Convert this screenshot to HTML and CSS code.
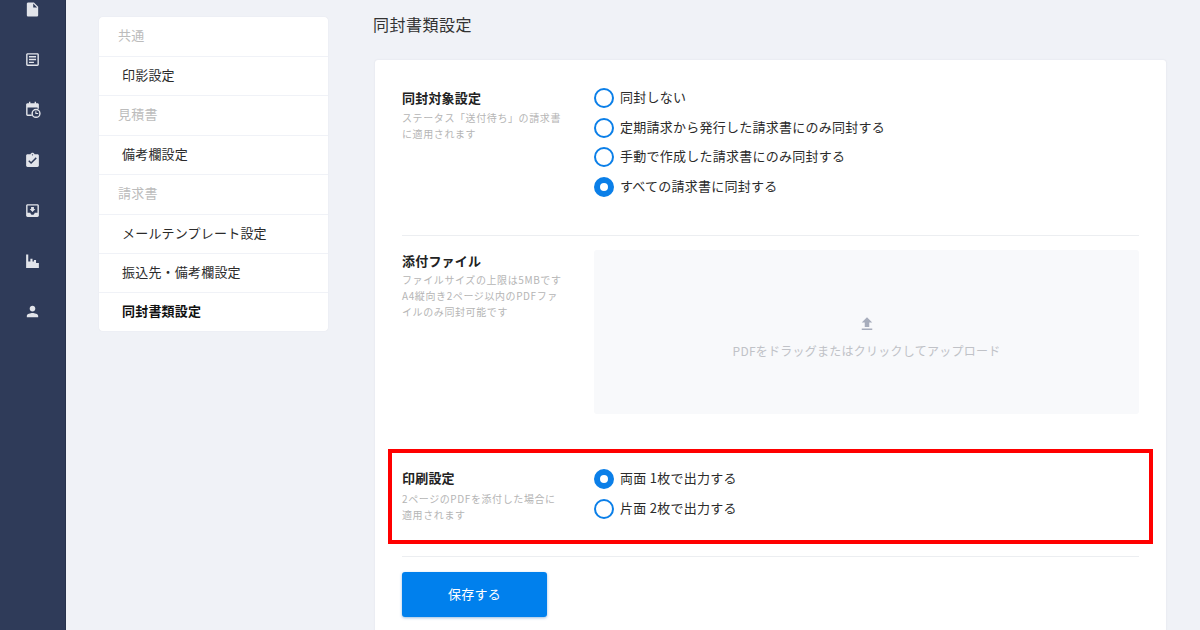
FILE: index.html
```html
<!doctype html>
<html lang="ja">
<head>
  <meta charset="utf-8">
  <meta name="viewport" content="width=device-width, initial-scale=1.0">
  <title>同封書類設定</title>
  <link rel="stylesheet" href="styles.css">
</head>
<body>

<div class="app">
  <nav class="sidebar">
    <a class="nav-icon"><svg viewBox="0 0 24 24"><path d="M6 2c-1.1 0-2 .9-2 2v16c0 1.1.9 2 2 2h12c1.1 0 2-.9 2-2V8l-6-6H6zm7 7V3.5L18.500 9H13z"/></svg></a>
    <a class="nav-icon"><svg viewBox="0 0 24 24"><path d="M19 5v14H5V5h14m0-2H5c-1.100 0-2 .9-2 2v14c0 1.100.9 2 2 2h14c1.100 0 2-.9 2-2V5c0-1.100-.9-2-2-2zM7 7h10v2H7V7zm0 4h10v2H7v-2zm0 4h7v2H7v-2z"/></svg></a>
    <a class="nav-icon"><svg viewBox="0 0 24 24"><path d="M7 1h2v2h6V1h2v2h2c1.100 0 2 .9 2 2v6h-2V9H5v10h6v2H5c-1.100 0-2-.9-2-2V5c0-1.100.9-2 2-2h2V1z"/><path fill-rule="evenodd" d="M17 11a6.500 6.500 0 1 0 0 13 6.500 6.500 0 0 0 0-13zm0 2a4.500 4.500 0 1 1 0 9 4.500 4.500 0 0 1 0-9zm-1 1.500V18.500h4V17h-2.500v-2.500H16z"/></svg></a>
    <a class="nav-icon"><svg viewBox="0 0 24 24"><path d="M19 3h-4.180C14.400 1.840 13.300 1 12 1s-2.400.84-2.820 2H5c-1.100 0-2 .9-2 2v14c0 1.100.9 2 2 2h14c1.100 0 2-.9 2-2V5c0-1.100-.9-2-2-2zm-7 0c.55 0 1 .45 1 1s-.45 1-1 1-1-.45-1-1 .45-1 1-1zm-2 14l-4-4 1.410-1.410L10 14.170l6.590-6.590L18 9l-8 8z"/></svg></a>
    <a class="nav-icon"><svg viewBox="0 0 24 24"><path d="M19 3H5c-1.100 0-2 .9-2 2v14c0 1.100.9 2 2 2h14c1.100 0 2-.9 2-2V5c0-1.100-.9-2-2-2zm0 12h-4c0 1.660-1.350 3-3 3s-3-1.340-3-3H5V5h14v10zm-3-5h-2V7h-4v3H8l4 4 4-4z"/></svg></a>
    <a class="nav-icon"><svg viewBox="0 0 24 24"><path d="M3 2h3v10h3V8h3v4h2v-2h3v4h4v7H3V2z"/></svg></a>
    <a class="nav-icon"><svg viewBox="0 0 24 24"><path d="M12 12c2.210 0 4-1.790 4-4s-1.790-4-4-4-4 1.790-4 4 1.790 4 4 4zm0 2c-2.670 0-8 1.340-8 4v2h16v-2c0-2.660-5.330-4-8-4z"/></svg></a>
  </nav>

  <aside class="menu">
    <div class="menu-group">共通</div>
    <div class="menu-item">印影設定</div>
    <div class="menu-group">見積書</div>
    <div class="menu-item">備考欄設定</div>
    <div class="menu-group">請求書</div>
    <div class="menu-item">メールテンプレート設定</div>
    <div class="menu-item">振込先・備考欄設定</div>
    <div class="menu-item active">同封書類設定</div>
  </aside>

  <main class="content">
    <h1>同封書類設定</h1>

    <div class="panel">
      <section class="row row-target">
        <div class="row-label">
          <h2>同封対象設定</h2>
          <p>ステータス「送付待ち」の請求書に適用されます</p>
        </div>
        <div class="radios">
          <label class="radio"><span class="dot"></span>同封しない</label>
          <label class="radio"><span class="dot"></span>定期請求から発行した請求書にのみ同封する</label>
          <label class="radio"><span class="dot"></span>手動で作成した請求書にのみ同封する</label>
          <label class="radio"><span class="dot on"></span>すべての請求書に同封する</label>
        </div>
      </section>

      <section class="row row-file">
        <div class="row-label">
          <h2>添付ファイル</h2>
          <p>ファイルサイズの上限は5MBです<br>A4縦向き2ページ以内のPDFファイルのみ同封可能です</p>
        </div>
        <div class="dropzone">
          <svg viewBox="0 0 24 24"><path d="M9 16h6v-6h4l-7-7-7 7h4v6zm-4 2h14v2H5v-2z"/></svg>
          <span>PDFをドラッグまたはクリックしてアップロード</span>
        </div>
      </section>

      <section class="row row-print">
        <div class="row-label">
          <h2>印刷設定</h2>
          <p>2ページのPDFを添付した場合に適用されます</p>
        </div>
        <div class="radios">
          <label class="radio"><span class="dot on"></span>両面 1枚で出力する</label>
          <label class="radio"><span class="dot"></span>片面 2枚で出力する</label>
        </div>
        <div class="highlight"></div>
      </section>

      <div class="actions">
        <button type="button" class="save">保存する</button>
      </div>
    </div>
  </main>
</div>

</body>
</html>
```

FILE: styles.css
```css
* {
  box-sizing: border-box;
}

html, body {
  margin: 0;
  height: 630px;
  overflow: hidden;
}

body {
  font-family: "Noto Sans CJK JP", "Noto Sans", sans-serif;
  background: #f0f2f7;
  color: #222;
}

.app {
  display: flex;
  height: 630px;
  overflow: hidden;
}

.sidebar {
  flex: 0 0 66px;
  height: 630px;
  background: #2f3b59;
  border-right: 1px solid #27324c;
  display: flex;
  flex-direction: column;
}

.nav-icon {
  flex: 0 0 50.400px;
  display: flex;
  align-items: center;
  justify-content: center;
}

.nav-icon:first-child {
  margin-top: -16px;
}

.nav-icon svg {
  width: 17px;
  height: 17px;
  fill: #e2e4ea;
}

.menu {
  flex: 0 0 229px;
  height: 314px;
  margin: 17px 0 0 33px;
  background: #f0f2f7;
  border-radius: 4px;
  overflow: hidden;
  display: flex;
  flex-direction: column;
  gap: 1.500px;
  box-shadow: 0 0 1px rgba(40, 50, 80, 0.15);
}

.menu-group, .menu-item {
  flex: 1;
  display: flex;
  align-items: center;
  background: #fff;
  font-size: 13px;
  letter-spacing: 0.2px;
  padding-bottom: 3px;
}

.menu-group {
  padding-left: 19px;
  padding-bottom: 4px;
  color: #bcbcbc;
}

.menu-item {
  padding-left: 23px;
  color: #2b2b2b;
}

.menu-item.active {
  font-weight: 700;
  color: #111;
}

.content {
  flex: 0 0 791px;
  margin-left: 47px;
}

h1 {
  margin: 13px 0 25px -2px;
  font-size: 16px;
  line-height: 22px;
  font-weight: 400;
  letter-spacing: 0.5px;
  color: #333;
}

.panel {
  background: #fff;
  border-radius: 3px;
  height: 620px;
  padding: 0 27px;
  box-shadow: 0 0 2px rgba(40, 50, 80, 0.1);
}

.row {
  display: grid;
  grid-template-columns: 192px 1fr;
  position: relative;
}

.row-target {
  height: 176px;
  padding-top: 28px;
  border-bottom: 1.500px solid #eceef1;
}

.row-file {
  height: 213px;
  padding-top: 14px;
}

.row-print {
  height: 108px;
  padding-top: 20px;
  border-bottom: 1.500px solid #eceef1;
}

.row-label h2 {
  margin: 0;
  font-size: 13px;
  line-height: 22px;
  font-weight: 700;
  letter-spacing: 0.2px;
  color: #222;
}

.row-target .row-label {
  margin-top: -1px;
}

.row-print .row-label {
  margin-top: -2px;
}

.row-label p {
  margin: 0;
  width: 162px;
  font-size: 10px;
  line-height: 16px;
  letter-spacing: 0.6px;
  color: #b5b5b5;
}

.row-target .row-label p {
  margin-top: 1px;
}

.row-print .row-label p {
  margin-top: 2px;
}

.radios {
  display: flex;
  flex-direction: column;
  gap: 9.500px;
}

.radio {
  display: flex;
  align-items: flex-start;
  gap: 6px;
  height: 20px;
  font-size: 13px;
  line-height: 17px;
  letter-spacing: 0.25px;
  color: #2b2b2b;
}

.dot {
  flex: 0 0 20px;
  width: 20px;
  height: 20px;
  border-radius: 50%;
  border: 2px solid #0b7fe8;
  background: #fff;
}

.dot.on {
  border: 6.500px solid #0b7fe8;
}

.dropzone {
  height: 164px;
  background: #f8f9fb;
  border-radius: 3px;
  display: flex;
  flex-direction: column;
  align-items: center;
  justify-content: center;
  gap: 10px;
  padding-top: 9px;
}

.dropzone svg {
  width: 18px;
  height: 18px;
  fill: #a7adbc;
}

.dropzone span {
  font-size: 12px;
  line-height: 16px;
  letter-spacing: 0.25px;
  color: #c0c2c7;
}

.highlight {
  position: absolute;
  left: -14px;
  right: -14px;
  top: 0;
  height: 95px;
  border: 4px solid #ff0000;
  pointer-events: none;
}

.actions {
  padding-top: 15px;
}

.save {
  width: 145px;
  height: 45px;
  border: none;
  border-radius: 3px;
  padding: 0 0 2px;
  background: #0080ed;
  color: #fff;
  font-family: inherit;
  font-size: 13px;
  letter-spacing: 0.2px;
  box-shadow: 0 1px 3px rgba(0, 90, 180, 0.4);
}
```
